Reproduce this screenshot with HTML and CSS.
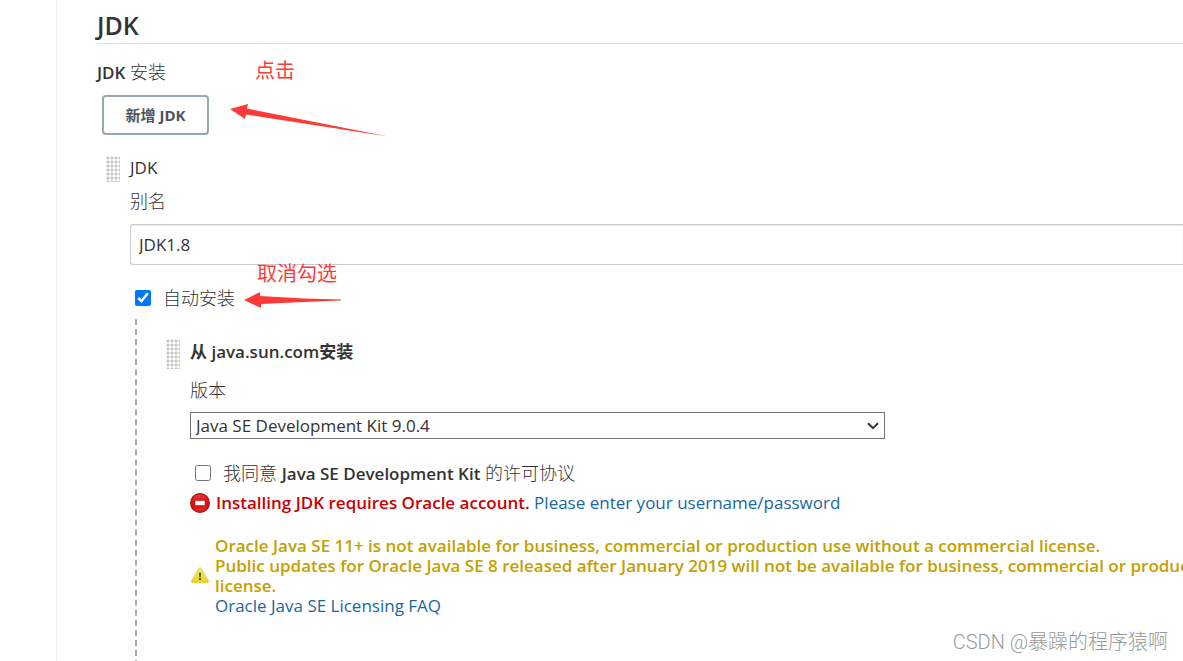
FILE: index.html
```html
<!DOCTYPE html>
<html lang="zh-CN">
<head>
    <meta charset="UTF-8">
    <meta name="viewport" content="width=device-width, initial-scale=1.0">
    <title>JDK</title>
    <link rel="stylesheet" href="styles.css">
</head>
<body>
    <div class="page">
        <div class="side"></div>
        <main class="config">
            <h1>JDK</h1>
            <div class="section-label"><span class="medium">JDK</span> 安装</div>
            <button type="button" class="add-button">新增 JDK</button>

            <div class="item">
                <div class="handle"></div>
                <div class="item-body">
                    <div class="row">JDK</div>
                    <label class="row name-label" for="jdkName">别名</label>
                    <input type="text" id="jdkName" class="text-input" value="JDK1.8">
                    <div class="check-row">
                        <input type="checkbox" id="autoInstall" checked>
                        <label for="autoInstall">自动安装</label>
                    </div>

                    <div class="installers">
                        <div class="handle handle-tall"></div>
                        <div class="item-body">
                            <div class="row installer-title">从 java.sun.com安装</div>
                            <label class="row version-label" for="version">版本</label>
                            <div class="select-box">
                                <select id="version" class="version-select">
                                    <option>Java SE Development Kit 9.0.4</option>
                                </select>
                                <svg class="chevron" width="12" height="8" viewBox="0 0 12 8">
                                    <path d="M1 1.2L6 6.2L11 1.2" fill="none" stroke="#333" stroke-width="2"/>
                                </svg>
                            </div>
                            <div class="check-row license-row">
                                <input type="checkbox" id="license">
                                <label for="license">我同意 <span class="medium">Java SE Development Kit</span> 的许可协议</label>
                            </div>
                            <div class="error">
                                <svg width="20" height="20" viewBox="0 0 20 20">
                                    <defs>
                                        <linearGradient id="red" x1="0" y1="0" x2="0" y2="1">
                                            <stop offset="0" stop-color="#e8403c"/>
                                            <stop offset="0.5" stop-color="#d80d10"/>
                                            <stop offset="1" stop-color="#e02a28"/>
                                        </linearGradient>
                                    </defs>
                                    <circle cx="10" cy="10" r="9.4" fill="url(#red)" stroke="#a31212" stroke-width="1.2"/>
                                    <rect x="5" y="7.5" width="10" height="5" rx="0.6" fill="#fff" stroke="#b31414" stroke-width="0.6"/>
                                </svg>
                                <span><strong>Installing JDK requires Oracle account.</strong> <a href="#">Please enter your username/password</a></span>
                            </div>
                            <div class="warning">
                                <svg width="20" height="20" viewBox="0 0 20 20">
                                    <defs>
                                        <linearGradient id="yellow" x1="0" y1="0" x2="0" y2="1">
                                            <stop offset="0" stop-color="#f7ec6a"/>
                                            <stop offset="1" stop-color="#e6d42a"/>
                                        </linearGradient>
                                    </defs>
                                    <path d="M9 2.4Q10 .9 11 2.4L18.4 15Q18.8 16.5 17.3 16.6H2.7Q1.2 16.5 1.6 15Z" fill="url(#yellow)" stroke="#d9c62c" stroke-width="0.8"/>
                                    <path d="M8.8 6.8h2.4l-.5 4.4H9.3z" fill="#5c5720"/>
                                    <rect x="9" y="12" width="2" height="2" fill="#5c5720"/>
                                </svg>
                                <div>
                                    <strong>Oracle Java SE 11+ is not available for business, commercial or production use without a commercial license.<br>
                                    Public updates for Oracle Java SE 8 released after January 2019 will not be available for business, commercial or production use without a commercial<br>
                                    license.</strong><br>
                                    <a href="#">Oracle Java SE Licensing FAQ</a>
                                </div>
                            </div>
                        </div>
                    </div>
                </div>
            </div>
        </main>
    </div>

    <!-- Notes drawn over the form -->
    <div class="note note-click">点击</div>
    <svg class="arrow arrow-click" width="158" height="36" viewBox="0 0 158 36">
        <path d="M0 6L18 1L17 5.5L158 33.5L16 11.5L15 16Z" fill="#fc3b38"/>
    </svg>
    <div class="note note-uncheck">取消勾选</div>
    <svg class="arrow arrow-uncheck" width="98" height="18" viewBox="0 0 98 18">
        <path d="M0 8L16 0V4L60 6.5L97 7.5V8.6L60 10L17 12V16Z" fill="#fc3b38"/>
    </svg>
    <div class="watermark">CSDN @暴躁的程序猿啊</div>
</body>
</html>
```
FILE: styles.css
```css
* {
    box-sizing: border-box;
}

body {
    margin: 0;
    height: 100vh;
    overflow: hidden;
    position: relative;
    background: #fff;
    color: #333;
    font-family: "Open Sans", "Noto Sans CJK SC", sans-serif;
    font-size: 17px;
    line-height: 24px;
}

/* Page columns */
.page {
    display: flex;
    min-height: 100vh;
}

.side {
    flex: 0 0 57px;
    border-right: 1px solid #e9eef2;
}

.config {
    flex: 1;
    min-width: 0;
    padding: 7px 0 0 40px;
}

h1 {
    margin: 0 0 16px;
    border-bottom: 1px solid #dcdfe0;
    font-size: 25px;
    font-weight: 600;
    line-height: 36px;
}

.section-label,
.name-label,
.version-label,
.check-row label {
    font-size: 18px;
    font-weight: 300;
}

.medium {
    font-size: 17px;
    font-weight: 600;
    line-height: 1;
}

/* Add button */
.add-button {
    display: block;
    width: 107px;
    height: 40px;
    margin: 11px 0 21px 5px;
    padding: 0 0 2px;
    border: 2px solid #98a6b0;
    border-radius: 4px;
    background: #fff;
    color: #4d545d;
    font-family: inherit;
    font-size: 15px;
    font-weight: 700;
}

/* Repeatable item with drag handle */
.item {
    display: flex;
    padding-left: 9px;
}

.item-body {
    flex: 1;
    min-width: 0;
    padding-left: 10px;
}

.handle {
    flex: 0 0 14px;
    height: 26px;
    background: radial-gradient(circle, #c4c4c0 1px, #fff 2px) 0 0 / 4px 4px;
}

.handle-tall {
    height: 30px;
}

.row {
    display: block;
}

.name-label {
    margin-top: 9px;
}

.text-input {
    display: block;
    width: 100%;
    height: 41px;
    margin-top: 11px;
    padding: 0 8px;
    border: 1px solid #ccc;
    border-right: 0;
    border-radius: 3px 0 0 3px;
    box-shadow: inset 0 1px 1px #e8e8e8;
    color: #333;
    font-family: inherit;
    font-size: 17px;
}

/* Checkboxes */
.check-row {
    display: flex;
    align-items: center;
    gap: 12px;
    margin-top: 21px;
    padding-left: 5px;
}

.check-row input {
    width: 16px;
    height: 16px;
    margin: 0;
}

/* Installer list */
.installers {
    display: flex;
    margin: 9px 0 0 5px;
    padding: 20px 0 60px 29px;
    border-left: 2px dashed #aaa;
}

.installer-title {
    margin-top: 1px;
    font-weight: 600;
}

.version-label {
    margin-top: 14px;
}

.select-box {
    position: relative;
    max-width: 695px;
    margin-top: 10px;
}

.version-select {
    display: block;
    width: 100%;
    height: 27px;
    padding: 0 24px 0 5px;
    appearance: none;
    border: 1px solid #767676;
    border-radius: 0;
    background: #fff;
    color: #333;
    font-family: inherit;
    font-size: 17px;
}

.chevron {
    position: absolute;
    top: 10px;
    right: 6px;
    pointer-events: none;
}

.license-row {
    margin-top: 22px;
}

/* Messages */
.error,
.warning {
    display: flex;
    align-items: center;
    line-height: 20px;
    white-space: nowrap;
}

.error svg,
.warning svg {
    flex: none;
}

.error {
    gap: 6px;
    margin-top: 8px;
    color: #c00;
}

.warning {
    gap: 5px;
    margin-top: 23px;
    color: #c4a000;
}

strong {
    font-weight: 600;
}

a {
    color: #1867a0;
    font-weight: 500;
    text-decoration: none;
}

/* Red notes and arrows */
.note,
.arrow,
.watermark {
    position: absolute;
}

.note {
    color: #fc3b38;
    font-family: "Noto Sans CJK SC", sans-serif;
    font-size: 20px;
}

.note-click {
    top: 58px;
    left: 255px;
}

.arrow-click {
    top: 103px;
    left: 230px;
}

.note-uncheck {
    top: 261px;
    left: 257px;
}

.arrow-uncheck {
    top: 292px;
    left: 244px;
}

.watermark {
    right: 15px;
    bottom: 7px;
    color: #999;
    font-family: Roboto, "Noto Sans CJK SC", sans-serif;
    font-size: 20px;
    font-weight: 300;
}
```
